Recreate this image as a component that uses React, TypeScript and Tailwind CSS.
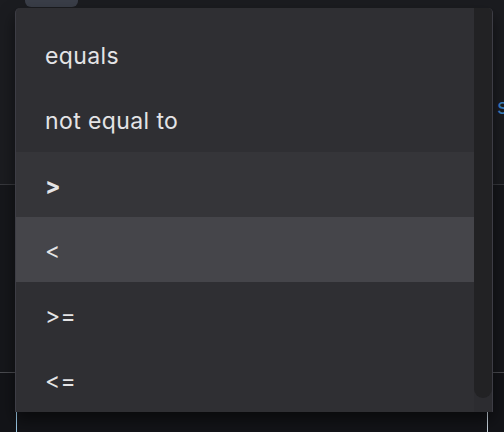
import React from 'react';

const options = [
  { label: 'equals' },
  { label: 'not equal to' },
  { label: '>', hover: true },
  { label: '<', selected: true },
  { label: '>=' },
  { label: '<=' },
];

export default function App() {
  return (
    <div className="relative h-[432px] w-[504px] overflow-hidden bg-[#1b1c20] font-['Inter',sans-serif]">
      {/* page behind the menu */}
      <div className="flex h-full flex-col">
        <div className="relative h-[184px] shrink-0">
          <div className="ml-[25px] h-[7px] w-[53px] rounded-b-[6px] bg-[#3a3e48]" />
          <div className="mt-[88px] flex justify-end">
            <span className="-mr-[4px] text-[21px] leading-[24px] text-[#3b82c4]">s</span>
          </div>
        </div>
        <div className="h-[1px] shrink-0 bg-[#37383d]" />
        <div className="h-[187px] shrink-0 bg-[#16171b]" />
        <div className="h-[1px] shrink-0 bg-[#4a4b50]" />
        <div className="flex-1 bg-[#131418] px-[16px]">
          <div className="h-full border-x border-[#c9d4de] border-l-[#9cc9e6]" />
        </div>
      </div>

      {/* dropdown menu */}
      <div className="absolute left-[15px] top-[8px] flex h-[404px] w-[478px] overflow-hidden rounded-t-[5px] border-x border-[#3d3d45] bg-[#2f2f33] shadow-[0_8px_16px_rgba(0,0,0,0.5)]">
        <ul className="flex-1 pt-[14px]">
          {options.map((o) => (
            <li
              key={o.label}
              className={`flex h-[65px] items-center pl-[29px] pt-[4px] text-[23px] tracking-[0.4px] text-[#e4e4e6] ${
                o.selected ? 'bg-[#45454a]' : o.hover ? 'bg-[#353539] font-bold' : ''
              }`}
            >
              {o.label}
            </li>
          ))}
        </ul>
        <div className="w-[18px] shrink-0 bg-[#2c2c30]">
          <div className="h-[390px] rounded-b-full rounded-t-[6px] bg-[#222224]" />
        </div>
      </div>
    </div>
  );
}
